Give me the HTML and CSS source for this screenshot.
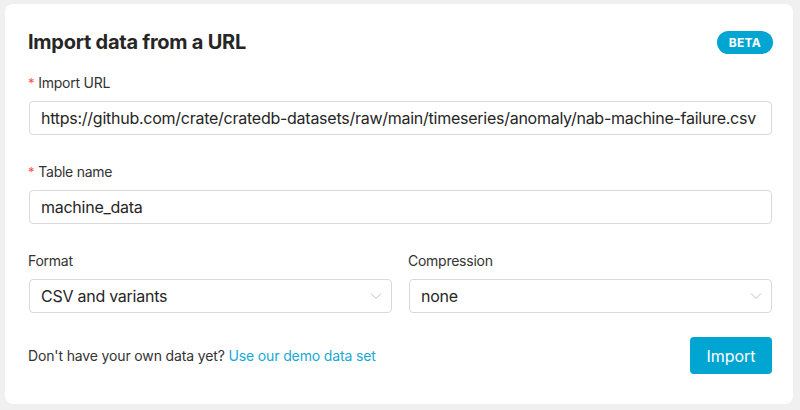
FILE: index.html
```html
<!DOCTYPE html>
<html lang="en">
<head>
<meta charset="utf-8">
<title>Import data from a URL</title>
<link rel="stylesheet" href="styles.css">
</head>
<body>
<div class="card">
  <div class="header">
    <h1 class="title">Import data from a URL</h1>
    <span class="badge">BETA</span>
  </div>
  <div class="field">
    <label class="label"><span class="req">*</span>Import URL</label>
    <div class="input">https://github.com/crate/cratedb-datasets/raw/main/timeseries/anomaly/nab-machine-failure.csv</div>
  </div>
  <div class="field">
    <label class="label"><span class="req">*</span>Table name</label>
    <div class="input">machine_data</div>
  </div>
  <div class="row">
    <div class="field col">
      <label class="label">Format</label>
      <div class="input select"><span>CSV and variants</span>
        <svg class="chev" width="12" height="8" viewBox="0 0 12 8"><path d="M1 1.5 L6 6.5 L11 1.5" fill="none" stroke="#bfbfbf" stroke-width="1"/></svg>
      </div>
    </div>
    <div class="field col">
      <label class="label">Compression</label>
      <div class="input select"><span>none</span>
        <svg class="chev" width="12" height="8" viewBox="0 0 12 8"><path d="M1 1.5 L6 6.5 L11 1.5" fill="none" stroke="#bfbfbf" stroke-width="1"/></svg>
      </div>
    </div>
  </div>
  <div class="footer">
    <p class="hint">Don't have your own data yet? <a class="link" href="#">Use our demo data set</a></p>
    <button class="btn">Import</button>
  </div>
</div>
</body>
</html>
```
FILE: styles.css
```css
html, body {
  margin: 0;
  padding: 0;
  background: #f0f0f0;
  font-family: Inter, "Noto Sans", sans-serif;
  color: #333333;
  letter-spacing: -0.016em;
}
body {
  padding: 4px 7px 6px 5px;
  height: 410px;
  box-sizing: border-box;
}
.card {
  background: #ffffff;
  border-radius: 8px;
  height: 400px;
  box-sizing: border-box;
  padding: 24px 21px 0 23px;
}
.header {
  display: flex;
  align-items: center;
  justify-content: space-between;
  height: 28px;
  margin-bottom: 16px;
}
.title {
  margin: 0;
  font-size: 20px;
  font-weight: 700;
  line-height: 28px;
  color: #262626;
}
.badge {
  background: #00a5d1;
  color: #ffffff;
  font-size: 12px;
  font-weight: 700;
  line-height: 23px;
  height: 23px;
  padding: 0 12px;
  border-radius: 12px;
  margin-right: -1px;
  letter-spacing: 0.3px;
}
.field {
  display: flex;
  flex-direction: column;
  margin-bottom: 26px;
}
.label {
  font-size: 14px;
  line-height: 22px;
  margin-bottom: 7px;
  color: #333333;
}
.req {
  color: #ff4d4f;
  margin-right: 4px;
  font-size: 13px;
}
.input {
  height: 34px;
  box-sizing: border-box;
  border: 1px solid #d9d9d9;
  border-radius: 4px;
  padding: 0 11px;
  font-size: 16px;
  line-height: 32px;
  color: #262626;
  white-space: nowrap;
  overflow: hidden;
  margin-left: 1px;
}
.row {
  display: flex;
  gap: 16px;
}
.col {
  flex: 1;
  margin-bottom: 24px;
}
.select {
  display: flex;
  align-items: center;
  justify-content: space-between;
}
.chev {
  margin-right: -2px;
}
.footer {
  display: flex;
  align-items: center;
  justify-content: space-between;
}
.hint {
  margin: 0;
  font-size: 14px;
  color: #333333;
  letter-spacing: -0.01em;
}
.link {
  color: #19a9d4;
  text-decoration: none;
}
.btn {
  background: #00a5d1;
  color: #ffffff;
  border: none;
  border-radius: 4px;
  width: 82px;
  height: 37px;
  font-family: inherit;
  font-size: 16px;
  letter-spacing: 0;
}
```
